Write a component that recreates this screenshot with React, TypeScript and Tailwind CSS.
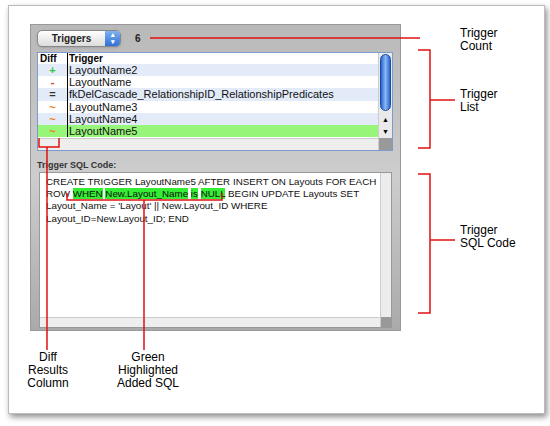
import React from "react";

const rows = [
  { d: "+", c: "text-[#2ecc40]", n: "LayoutName2", bg: "bg-[#e3ebf8]" },
  { d: "-", c: "text-[#e0301e]", n: "LayoutName", bg: "bg-white" },
  { d: "=", c: "text-[#333]", n: "fkDelCascade_RelationshipID_RelationshipPredicates", bg: "bg-[#e3ebf8]" },
  { d: "~", c: "text-[#f07a10]", n: "LayoutName3", bg: "bg-white" },
  { d: "~", c: "text-[#f07a10]", n: "LayoutName4", bg: "bg-[#e3ebf8]" },
  { d: "~", c: "text-[#f07a10]", n: "LayoutName5", bg: "bg-[#97f57a]" },
];

const G = ({ children }: { children: React.ReactNode }) => (
  <span className="bg-[#33ee33]">{children}</span>
);

export default function App() {
  return (
    <div className="w-[550px] h-[426px] bg-white relative" style={{ fontFamily: '"Liberation Sans", Arial, sans-serif' }}>
      <div className="absolute left-[8px] top-[5px] w-[537px] h-[409px] bg-white border border-[#bbb] shadow-[2px_3px_6px_rgba(0,0,0,0.45)]" />
      {/* panel */}
      <div className="absolute left-[30px] top-[24px] w-[371px] h-[307px] bg-gradient-to-b from-[#b9b9b9] via-[#cdcdcd] to-[#aaaaaa] border border-[#999] flex flex-col px-[6px] pt-[4px]">
        <div className="flex items-center h-[18px]">
          <div className="w-[84px] h-[17px] rounded-[5px] border border-[#888] bg-gradient-to-b from-white to-[#dcdcdc] flex items-center text-[10px] font-bold text-[#222] shadow-sm">
            <span className="flex-1 text-center">Triggers</span>
            <span className="w-[15px] h-[15px] rounded-r-[4px] bg-gradient-to-b from-[#7fb1ef] to-[#2f6fd6] text-white text-[7px] leading-[7px] flex flex-col items-center justify-center">▴<br />▾</span>
          </div>
          <span className="ml-[14px] text-[10px] font-bold text-[#222]">6</span>
        </div>
        <div className="mt-[5px] w-[356px] h-[99px] border border-[#7c9ccf] bg-white flex">
          <div className="flex-1 flex flex-col">
            <div className="flex h-[11px] text-[10px] font-bold leading-[11px]">
              <span className="w-[29px] pl-[2px]">Diff</span>
              <span className="pl-[1px] border-l border-black">Trigger</span>
            </div>
            {rows.map((r, i) => (
              <div key={i} className={`flex h-[12.2px] text-[11px] leading-[12px] ${r.bg}`}>
                <span className={`w-[29px] text-center font-bold ${r.c}`}>{r.d}</span>
                <span className="pl-[1px] border-l border-black text-[#111]">{r.n}</span>
              </div>
            ))}
            <div className="flex-1" />
            <div className="h-[12px] bg-[#eee] border-t border-[#ccc]" />
          </div>
          <div className="w-[14px] bg-[#eaeaea] border-l border-[#ccc] flex flex-col items-center">
            <div className="w-[11px] h-[57px] mt-[1px] rounded-full bg-gradient-to-r from-[#2a63d0] via-[#8ab8f4] to-[#2a63d0] border border-[#1c4aa0]" />
            <div className="flex-1" />
            <span className="text-[7px] leading-[12px]">▲</span>
            <span className="text-[7px] leading-[12px]">▼</span>
            <div className="w-full h-[12px] bg-[#999]" />
          </div>
        </div>
        <div className="mt-[9px] text-[9px] leading-[10px] font-bold text-[#333]">Trigger SQL Code:</div>
        <div className="mt-[2px] ml-[2px] w-[353px] h-[156px] bg-white border border-[#999] flex">
          <div className="flex-1 flex flex-col">
            <div className="flex-1 pl-[6px] pt-[3px] text-[9.8px] leading-[12.2px] text-[#111] whitespace-nowrap">
              CREATE TRIGGER LayoutName5 AFTER INSERT ON Layouts FOR EACH<br />
              ROW <G>WHEN</G> <G>New.Layout_Name</G> <G>is</G> <G>NULL</G> BEGIN UPDATE Layouts SET<br />
              Layout_Name = 'Layout' || New.Layout_ID WHERE<br />
              Layout_ID=New.Layout_ID; END
            </div>
            <div className="h-[10px] bg-[#eee] border-t border-[#ccc]" />
          </div>
          <div className="w-[11px] bg-[#ececec] border-l border-[#ccc] flex flex-col">
            <div className="flex-1" />
            <div className="h-[10px] bg-[#999]" />
          </div>
        </div>
      </div>
      {/* annotations */}
      <svg className="absolute left-0 top-0" width="550" height="426">
        <g stroke="#e01010" strokeWidth="1.5" fill="none">
          <line x1="150" y1="38" x2="420" y2="38" />
          <polyline points="418,50 430,50 430,148 418,148" />
          <line x1="430" y1="100" x2="455" y2="100" />
          <polyline points="418,174 430,174 430,313 418,313" />
          <line x1="430" y1="240" x2="455" y2="240" />
          <polyline points="39,138 39,147 59,147 59,138" />
          <line x1="47" y1="147" x2="47" y2="350" />
          <polyline points="67,193 67,200 222,200 222,193" />
          <line x1="144" y1="200" x2="144" y2="350" />
        </g>
      </svg>
      <div className="absolute left-[460px] top-[27px] text-[12px] leading-[13px] text-black">Trigger<br />Count</div>
      <div className="absolute left-[460px] top-[88px] text-[12px] leading-[13px] text-black">Trigger<br />List</div>
      <div className="absolute left-[460px] top-[224px] text-[12px] leading-[13px] text-black">Trigger<br />SQL Code</div>
      <div className="absolute left-[8px] w-[80px] top-[351px] text-[12px] leading-[13px] text-black text-center">Diff<br />Results<br />Column</div>
      <div className="absolute left-[98px] w-[100px] top-[351px] text-[12px] leading-[13px] text-black text-center">Green<br />Highlighted<br />Added SQL</div>
    </div>
  );
}
